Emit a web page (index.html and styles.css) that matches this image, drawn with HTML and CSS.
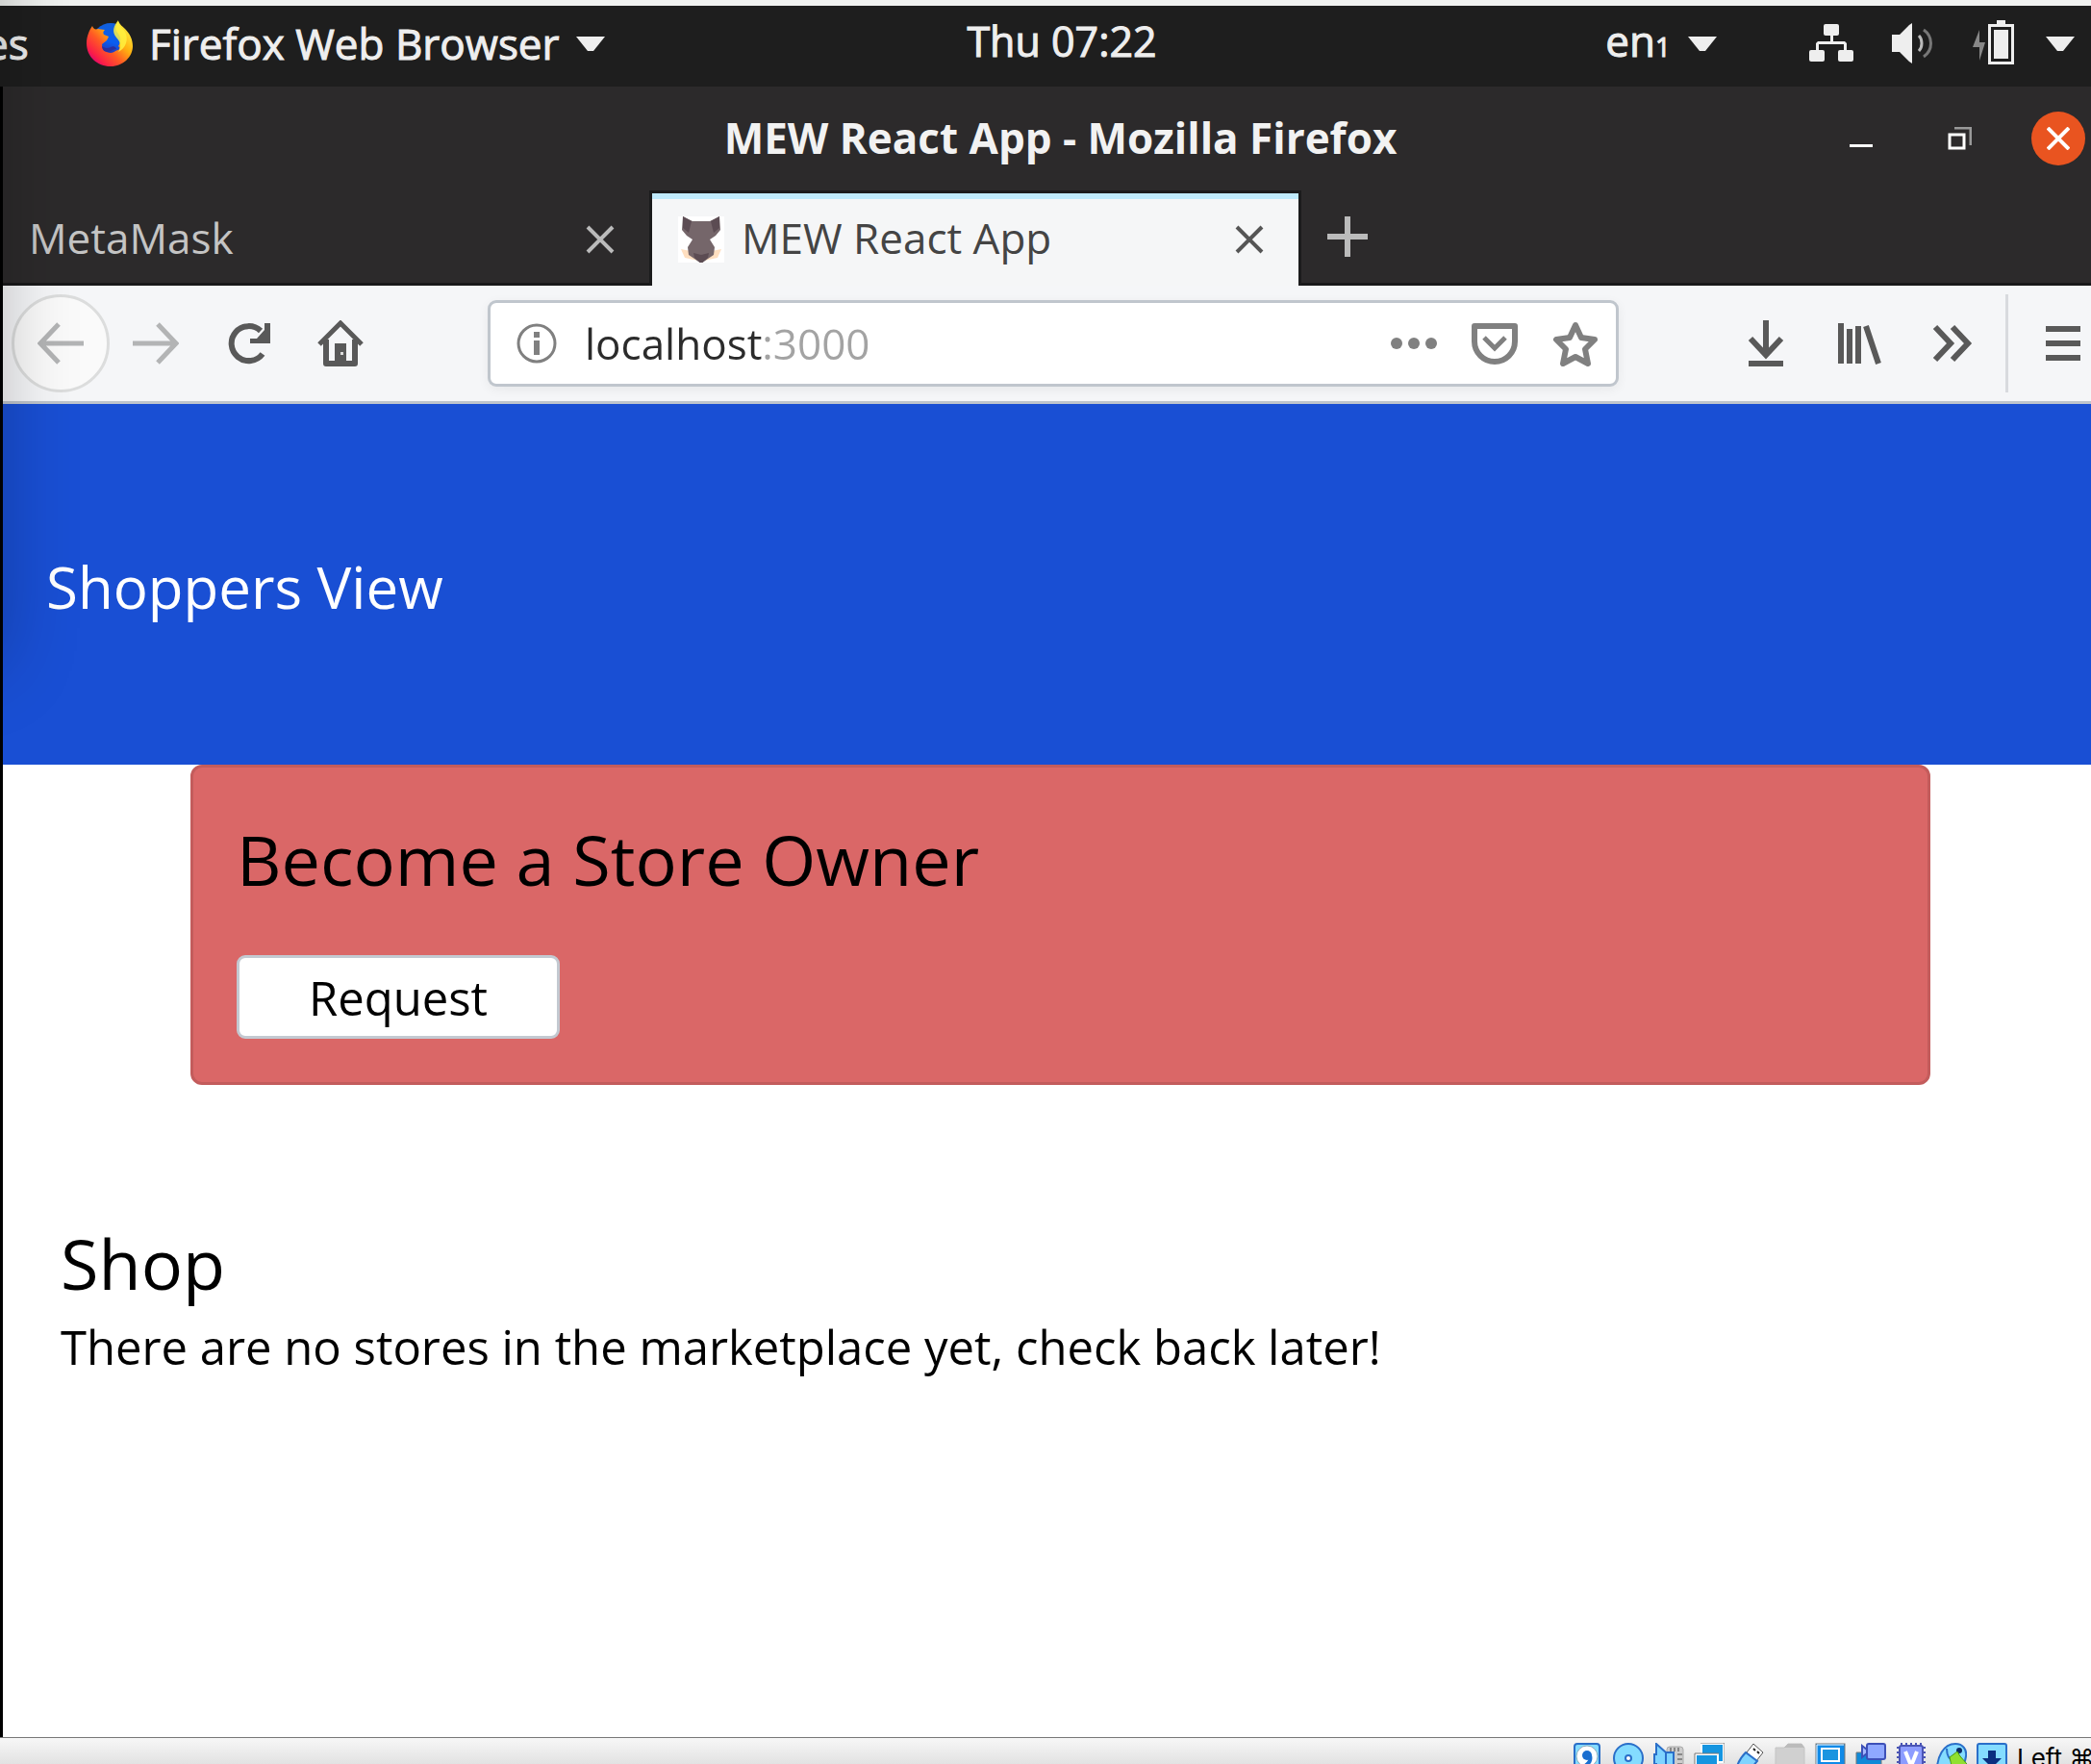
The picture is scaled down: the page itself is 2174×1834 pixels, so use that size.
FILE: index.html
```html
<!DOCTYPE html>
<html lang="en">
<head>
<meta charset="utf-8">
<meta name="viewport" content="width=device-width, initial-scale=1">
<title>MEW React App</title>
<link rel="stylesheet" href="styles.css">
</head>
<body>
<header class="panel">
  <div class="panel-left">
    <span class="activities">es</span>
    <button class="plain app-menu" type="button">
      <svg class="icon48" viewBox="0 0 48 48" aria-hidden="true">
        <defs>
          <linearGradient id="flame" x1="0.9" y1="0.1" x2="0.1" y2="0.9"><stop offset="0" stop-color="#fff13f"/><stop offset=".35" stop-color="#ffb010"/><stop offset=".6" stop-color="#ff5a24"/><stop offset=".85" stop-color="#fb1f46"/><stop offset="1" stop-color="#d6007a"/></linearGradient>
          <linearGradient id="globe" x1="0.3" y1="1" x2="0.6" y2="0"><stop offset="0" stop-color="#3a1c8c"/><stop offset=".5" stop-color="#0a5df0"/><stop offset="1" stop-color="#1260d8"/></linearGradient>
        </defs>
        <circle cx="25" cy="22" r="19" fill="url(#globe)"/>
        <path d="M6 6c1 3 3 4 6 3 2 0 4 1 7 1-2 2-2 3-1 5l5 2-2 4-5 4c0 5 4 9 9 9 4 0 5-3 8-3 2-1 2-3 0-4 3-4 3-9 0-13-4-5-3-9 0-13 2 4 4 5 7 8 5 5 8 11 8 18C48 38 38 48 25 48 11 48 0 38 0 24 0 17 3 10 6 6z" fill="url(#flame)"/>
        <path d="M33 0c-5 6-7 12-2 18 5 5 5 10 2 15 8-4 11-13 7-21C37 8 33 5 33 0z" fill="#fff13f" opacity=".85"/>
        <path d="M16 27c3 2 6 3 9 1 3-2 6 0 6 2-4 0-6 3-9 3-4 0-6-3-6-6z" fill="#2b2f9e"/>
      </svg>
      <span class="panel-text">Firefox Web Browser</span>
      <svg class="caret" viewBox="0 0 30 15" aria-hidden="true"><path d="M0 0h30L18 15h-6z" fill="#eee"/></svg>
    </button>
  </div>
  <time class="panel-text clock">Thu 07:22</time>
  <div class="panel-right">
    <button class="plain lang" type="button"><span class="panel-text">en<small>1</small></span>
      <svg class="caret" viewBox="0 0 30 15" aria-hidden="true"><path d="M0 0h30L18 15h-6z" fill="#eee"/></svg>
    </button>
    <button class="plain tray" type="button" aria-label="System menu">
      <svg width="46" height="42" viewBox="0 0 46 42" aria-hidden="true"><g fill="#eee"><rect x="15" y="1" width="16" height="12" rx="2"/><rect x="0" y="28" width="16" height="12" rx="2"/><rect x="30" y="28" width="16" height="12" rx="2"/><path d="M22 12h3v7h12l2 2v8h-3v-7H10v7H7v-8l2-2h13z"/></g></svg>
      <svg width="44" height="42" viewBox="0 0 44 42" aria-hidden="true"><path d="M0 12h8L18 2l3-2v42l-3-2L8 30H0z" fill="#eee"/><path d="M28 13c4 4 4 12 0 16" fill="none" stroke="#bbb" stroke-width="3"/><path d="M33 7c10 7 10 21 0 28" fill="none" stroke="#777" stroke-width="3"/></svg>
      <svg width="44" height="48" viewBox="0 0 44 48" aria-hidden="true"><path d="M7 10v13h6L7 42V28H0z" fill="#888"/><path d="M25 0h9v4h9v42H16V4h9z" fill="#eee"/><path d="M19 7h21v36H19z" fill="#1e1e1e"/><path d="M22 10h15v30H22z" fill="#eee"/></svg>
      <svg class="caret" viewBox="0 0 30 15" aria-hidden="true"><path d="M0 0h30L18 15h-6z" fill="#eee"/></svg>
    </button>
  </div>
</header>

<div class="window">
  <div class="titlebar">
    <div class="window-title">MEW React App - Mozilla Firefox</div>
    <div class="window-controls">
      <button class="plain" type="button" aria-label="Minimize"><svg width="24" height="24" viewBox="0 0 24 24"><path d="M0 18h24v3H0z" fill="#fff"/></svg></button>
      <button class="plain" type="button" aria-label="Restore"><svg width="25" height="24" viewBox="0 0 25 24"><path d="M7 1h17v18" fill="none" stroke="#999" stroke-width="3"/><path d="M2 8h15v14H2z" fill="none" stroke="#fff" stroke-width="3"/></svg></button>
      <button class="plain close" type="button" aria-label="Close"><svg width="24" height="24" viewBox="0 0 24 24"><path d="M1 1l22 22M23 1L1 23" stroke="#fff" stroke-width="4"/></svg></button>
    </div>
  </div>

  <div class="tabs">
    <div class="tab">
      <span class="tab-label">MetaMask</span>
      <button class="plain" type="button" aria-label="Close MetaMask"><svg width="30" height="30" viewBox="0 0 30 30"><path d="M2 2l26 26M28 2L2 28" stroke="#bbb" stroke-width="4"/></svg></button>
    </div>
    <div class="tab active">
      <svg class="icon48" viewBox="0 0 48 48" aria-hidden="true"><path d="M0 0h48v48H0z" fill="#fff"/><path d="M3 34l10 2 8 10-14-3zM45 34l-10 2-8 10 14-3z" fill="#ffdfc0"/><path d="M5 0l10 5h18l10-5 1 14-5 6-6 4 5 8-1 8-6 4-7 5-7-5-6-4-1-8 5-8-6-4-5-6z" fill="#75666a"/><path d="M5 0l9 5-3 12-6-5zM43 0l-9 5 3 12 6-5zM16 38l8 2 8-2-1 5-7 6-7-6z" fill="#5c4c53"/></svg>
      <span class="tab-label">MEW React App</span>
      <button class="plain" type="button" aria-label="Close MEW React App"><svg width="30" height="30" viewBox="0 0 30 30"><path d="M2 2l26 26M28 2L2 28" stroke="#555" stroke-width="4"/></svg></button>
    </div>
    <button class="plain new-tab" type="button" aria-label="New tab"><svg width="42" height="42" viewBox="0 0 42 42"><path d="M21 0v42M0 21h42" stroke="#bbb" stroke-width="6"/></svg></button>
  </div>

  <nav class="toolbar">
    <button class="plain back" type="button" aria-label="Back"><svg class="icon48" viewBox="0 0 48 48"><path d="M48 24H4M22 4L3 24l19 20" fill="none" stroke="#b3b4b5" stroke-width="5"/></svg></button>
    <button class="plain forward" type="button" aria-label="Forward"><svg class="icon48" viewBox="0 0 48 48"><path d="M0 24h44M26 4l19 20-19 20" fill="none" stroke="#b3b4b5" stroke-width="5"/></svg></button>
    <button class="plain" type="button" aria-label="Reload"><svg class="icon48" viewBox="0 0 48 48"><path d="M39 35A18 18 0 1 1 37 11" fill="none" stroke="#595959" stroke-width="6"/><path d="M47 3v21H26v-5h7l8-9V3z" fill="#595959"/></svg></button>
    <button class="plain" type="button" aria-label="Home"><svg class="icon48" viewBox="0 0 48 48"><path d="M2 25L24 3l22 22" fill="none" stroke="#595959" stroke-width="5"/><path d="M9 20v25h30V20" fill="none" stroke="#595959" stroke-width="6" stroke-linejoin="round"/><path d="M18 45V24h12v21z" fill="#595959"/><path d="M24 33h3v3h-3z" fill="#ddd"/></svg></button>
    <div class="urlbar">
      <svg width="42" height="42" viewBox="0 0 42 42" aria-hidden="true"><circle cx="21" cy="21" r="19" fill="none" stroke="#808080" stroke-width="3"/><path d="M18 9h6v6h-6zM18 18h6v15h-6z" fill="#808080"/></svg>
      <input class="url" type="text" value="localhost:3000" aria-label="Address">
      <button class="plain" type="button" aria-label="Page actions"><svg class="icon48" viewBox="0 0 48 48"><g fill="#808080"><circle cx="6" cy="24" r="6"/><circle cx="24" cy="24" r="6"/><circle cx="42" cy="24" r="6"/></g></svg></button>
      <button class="plain" type="button" aria-label="Save to Pocket"><svg class="icon48" viewBox="0 0 48 48"><path d="M3 6h42v16a21 21 0 0 1-42 0z" fill="none" stroke="#808080" stroke-width="6" stroke-linejoin="round"/><path d="M13 18l11 11 11-11" fill="none" stroke="#808080" stroke-width="5"/></svg></button>
      <button class="plain" type="button" aria-label="Bookmark"><svg class="icon48" viewBox="0 0 48 48"><path d="M24 5l6 13 14 2-10 10 3 15-13-7-13 7 3-15L4 20l14-2z" fill="none" stroke="#808080" stroke-width="6" stroke-linejoin="round"/></svg></button>
    </div>
    <button class="plain" type="button" aria-label="Downloads"><svg class="icon48" viewBox="0 0 48 48"><path d="M24 0v36M8 19l16 17 16-17" fill="none" stroke="#595959" stroke-width="6"/><path d="M6 42h36v6H6z" fill="#595959"/></svg></button>
    <button class="plain" type="button" aria-label="Library"><svg class="icon48" viewBox="0 0 48 48"><path d="M6 3v42M15 9v36M24 6v39M32 6l13 39" fill="none" stroke="#595959" stroke-width="6"/></svg></button>
    <button class="plain" type="button" aria-label="More tools"><svg class="icon48" viewBox="0 0 48 48"><path d="M8 7l16 17L8 41M26 7l16 17-16 17" fill="none" stroke="#595959" stroke-width="6"/></svg></button>
    <span class="separator"></span>
    <button class="plain" type="button" aria-label="Menu"><svg class="icon48" viewBox="0 0 48 48"><path d="M6 6h36v6H6zM6 21h36v6H6zM6 36h36v6H6z" fill="#595959"/></svg></button>
  </nav>

  <main class="page">
    <header class="hero"><h1>Shoppers View</h1></header>
    <section class="card">
      <h2>Become a Store Owner</h2>
      <button class="request" type="button">Request</button>
    </section>
    <section class="shop">
      <h2>Shop</h2>
      <p>There are no stores in the marketplace yet, check back later!</p>
    </section>
  </main>
</div>

<footer class="status">
  <svg viewBox="0 0 32 32"><rect x="2" y="1" width="26" height="34" rx="3" fill="#84dcff" stroke="#2a6fc9" stroke-width="2"/><circle cx="15" cy="14" r="11" fill="#fff" stroke="#8ab" /><circle cx="15" cy="13" r="5" fill="#1a6fd0"/><path d="M18 13c2 7-3 9-7 13" fill="none" stroke="#1a6fd0" stroke-width="4"/></svg>
  <svg viewBox="0 0 32 32"><circle cx="16" cy="16" r="15" fill="#84dcff" stroke="#2a6fc9" stroke-width="2"/><circle cx="16" cy="16" r="3" fill="#fff" stroke="#2a6fc9" stroke-width="2"/></svg>
  <svg viewBox="0 0 32 32"><rect x="14" y="4" width="17" height="30" rx="3" fill="#ccc" stroke="#aaa"/><path d="M18 5v4M22 5v4M26 5v4M25 12h5M25 17h5M25 22h5" stroke="#888" stroke-width="2"/><path d="M3 1l10 9h8v14h-8L3 32V22H1V12h2z" fill="#7fd4ff" stroke="#2a6fc9" stroke-width="2"/><path d="M13 10v14" stroke="#2a6fc9" stroke-width="2"/></svg>
  <svg viewBox="0 0 32 32"><rect x="8" y="1" width="23" height="19" fill="#1595e0" stroke="#fff" stroke-width="2"/><path d="M7 0h25v21" fill="none" stroke="#777"/><rect x="2" y="12" width="23" height="19" fill="#1595e0" stroke="#fff" stroke-width="2"/><path d="M1 32V11h25" fill="none" stroke="#777"/></svg>
  <svg viewBox="0 0 32 32"><path d="M20 1l10 9-7 9-10-9z" fill="#fff" stroke="#555"/><path d="M20 6l2 2M24 9l2 2" stroke="#222" stroke-width="2"/><path d="M12 10l12 9-11 13H2c0-9 4-16 10-22z" fill="#7fd4ff" stroke="#2a6fc9" stroke-width="2"/></svg>
  <svg viewBox="0 0 32 32"><path d="M1 34V5h9l4-4h14l3 4v29z" fill="#d0d0d0" stroke="#c4c4c4"/><path d="M10 5l4-4h14l3 4z" fill="#bbb"/></svg>
  <svg viewBox="0 0 32 32"><rect x="1" y="1" width="30" height="30" fill="#0f8ae8" stroke="#777"/><path d="M2 32V2h28" fill="none" stroke="#fff"/><rect x="7" y="6" width="18" height="13" fill="#1a95e0" stroke="#fff" stroke-width="2"/></svg>
  <svg viewBox="0 0 32 32"><path d="M1 32V10h26v22z" fill="#0f8ad8" stroke="#777"/><rect x="12" y="1" width="19" height="16" rx="2" fill="#8fa8ff" stroke="#3d50b8" stroke-width="2"/><path d="M7 3l5 4v4l-5 4z" fill="#a5b8ff" stroke="#3d50b8" stroke-width="2"/></svg>
  <svg viewBox="0 0 32 32"><path d="M1 5h30M1 10h30M1 15h30M1 20h30M6 0v30M11 0v30M16 0v30M21 0v30M26 0v30" stroke="#4a55b5" stroke-width="2"/><rect x="4" y="3" width="24" height="28" rx="2" fill="#8c9cff" stroke="#4a55b5" stroke-width="2"/><path d="M10 9l6 15 6-15" fill="none" stroke="#fff" stroke-width="4"/></svg>
  <svg viewBox="0 0 32 32"><path d="M1 32C0 14 8 1 20 1c8 0 12 6 11 13-1 8-6 16-12 20z" fill="#84dcff" stroke="#2a6fc9" stroke-width="2"/><path d="M11 6c0 7 3 12 8 14" fill="none" stroke="#2a6fc9" stroke-width="2"/><circle cx="24" cy="8" r="3" fill="#0a2a66"/><path d="M14 15l8-6 3 5 7 8-8 12-8-10z" fill="#90e030" stroke="#4a9a10"/></svg>
  <svg viewBox="0 0 32 32"><rect x="1" y="1" width="30" height="34" rx="2" fill="#84dcff" stroke="#2a6fc9" stroke-width="2"/><path d="M12 8h8v8h6L16 26 6 16h6z" fill="#0a2f80"/></svg>
  <span class="host-key">Left ⌘</span>
</footer>
</body>
</html>
```
FILE: styles.css
```css
* { box-sizing: border-box; }

body {
  margin: 0;
  height: 100vh;
  display: flex;
  flex-direction: column;
  overflow: hidden;
  position: relative;
  background: #fff;
  font-family: "Open Sans", "Noto Sans", sans-serif;
  font-size: 44px;
  color: #000;
}

/* soft shadow cast by the window to the left */
body::after {
  content: "";
  position: absolute;
  left: -200px;
  top: -100px;
  width: 200px;
  height: 790px;
  box-shadow: 0 0 80px rgba(0, 0, 0, .25);
  pointer-events: none;
}

h1, h2, p { margin: 0; font-weight: 400; }
svg { display: block; flex: none; }

.plain {
  display: flex;
  align-items: center;
  justify-content: center;
  padding: 0;
  border: 0;
  background: none;
  color: inherit;
  font: inherit;
}

.icon48 { width: 48px; height: 48px; }
.caret { width: 30px; height: 15px; }

/* desktop panel */
.panel {
  display: grid;
  grid-template-columns: 1fr auto 1fr;
  align-items: center;
  flex: none;
  height: 90px;
  padding-bottom: 6px;
  border-top: 6px solid #f0f2f0;
  background: #1e1e1e;
  color: #eee;
}

.panel-text, .activities {
  font-size: 44px;
  line-height: 60px;
  white-space: nowrap;
  -webkit-text-stroke: 1px #eee;
}

.panel-text small { font-size: 28px; }

.panel-left, .panel-right { display: flex; align-items: center; }
.panel-right { justify-content: flex-end; padding-right: 17px; }
.activities { width: 90px; text-indent: -16px; }
.app-menu { gap: 17px; }
.clock { padding: 0 0 4px 34px; font-size: 43px; }
.lang { gap: 18px; }
.tray { gap: 40px; margin-left: 96px; }
.tray .caret { margin-left: -8px; }

/* browser window */
.window {
  flex: 1;
  min-height: 0;
  display: flex;
  flex-direction: column;
  border-left: 3px solid #000;
}

.titlebar {
  display: grid;
  grid-template-columns: 1fr auto 1fr;
  align-items: center;
  flex: none;
  height: 108px;
  background: #2c2a2b;
  color: #f2f2f2;
}

.window-title {
  grid-column: 2;
  padding: 0 0 3px 28px;
  font-weight: 700;
  line-height: 60px;
  white-space: nowrap;
}

.window-controls {
  display: flex;
  align-items: center;
  justify-content: flex-end;
  gap: 78px;
  padding-right: 6px;
}

.close {
  width: 56px;
  height: 56px;
  margin-left: -16px;
  border-radius: 50%;
  background: #e95420;
}

.tabs {
  display: flex;
  flex: none;
  height: 99px;
  background: linear-gradient(#2c2a2b 96px, #19191a 96px);
  color: #c4c4c4;
}

.tab {
  display: flex;
  align-items: center;
  gap: 18px;
  width: 672px;
  padding: 9px 36px 6px 27px;
}

.tab-label { flex: 1; padding-bottom: 4px; line-height: 60px; }

.active {
  width: 678px;
  padding: 6px 36px 6px 27px;
  border: 3px solid #1b1b1c;
  border-bottom: 0;
  background: linear-gradient(#bee9fb 6px, #f5f6f7 6px);
  color: #444;
}

.new-tab { margin: 0 0 3px 27px; }

.toolbar {
  display: flex;
  align-items: center;
  flex: none;
  gap: 48px;
  height: 123px;
  padding: 0 5px 0 9px;
  border-bottom: 3px solid #bfc5cc;
  background: #f5f6f8;
}

.back {
  width: 102px;
  height: 102px;
  border: 3px solid #dcdddd;
  border-radius: 50%;
  background: #fafafa;
}

.forward { margin-left: -24px; }

.urlbar {
  display: flex;
  align-items: center;
  flex: 1;
  gap: 36px;
  height: 90px;
  margin: 0 81px;
  padding: 0 18px 0 27px;
  border: 3px solid #c0c6cd;
  border-radius: 9px;
  background: #fff;
  box-shadow: 0 3px 12px rgba(0, 0, 0, .06);
}

/* host in dark text, port dimmed */
.url {
  flex: 1;
  min-width: 0;
  height: 60px;
  margin-left: -7px;
  padding: 0;
  border: 0;
  background: linear-gradient(to right, #2b2b2b 187px, #a3a3a3 187px);
  background-clip: text;
  -webkit-background-clip: text;
  -webkit-text-fill-color: transparent;
  color: #2b2b2b;
  font: inherit;
}

.separator {
  width: 3px;
  height: 102px;
  margin: 0 -15px;
  background: #d8dade;
}

/* web page */
.page { flex: 1; min-height: 0; }

.hero {
  display: flex;
  align-items: center;
  height: 375px;
  padding: 4px 45px 0;
  background: #194fd4;
  color: #fff;
}

.hero h1 { font-size: 60px; line-height: 80px; }

.card {
  margin: 0 167px 0 195px;
  padding: 45px;
  border: 3px solid #c35c5c;
  border-radius: 12px;
  background: #da6767;
}

.card h2, .shop h2 { font-size: 72px; line-height: 100px; }

.request {
  display: block;
  width: 336px;
  height: 87px;
  margin-top: 50px;
  padding: 0;
  border: 3px solid #c3c9d1;
  border-radius: 9px;
  background: #fff;
  color: #000;
  font-family: inherit;
  font-size: 49px;
}

.shop { padding: 135px 60px 0; }
.shop p { font-size: 49px; line-height: 74px; }

/* virtual machine status bar */
.status {
  display: flex;
  justify-content: flex-end;
  flex: none;
  gap: 10px;
  height: 28px;
  padding-top: 5px;
  border-top: 1px solid #777;
  background: linear-gradient(#f7f7f7, #e2e2e2);
  overflow: hidden;
}

.status svg { width: 32px; height: 32px; }

.host-key {
  width: 77px;
  font-family: Inter, "DejaVu Sans", sans-serif;
  font-size: 26px;
  line-height: 32px;
  white-space: nowrap;
}
```
